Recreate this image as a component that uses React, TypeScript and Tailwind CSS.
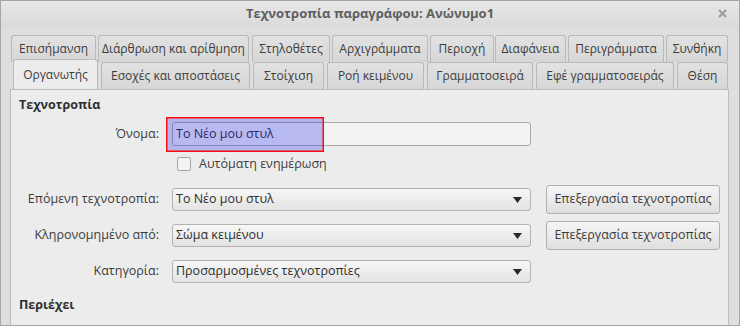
const font = { fontFamily: '"Open Sans", "Noto Sans", "DejaVu Sans", sans-serif' };

const topTabs = [
  { label: "Επισήμανση", cls: "ml-[10px] w-[85px]" },
  { label: "Διάρθρωση και αρίθμηση", cls: "ml-[2px] w-[151px]" },
  { label: "Στηλοθέτες", cls: "ml-[3px] w-[78px]" },
  { label: "Αρχιγράμματα", cls: "ml-[2px] w-[96px]" },
  { label: "Περιοχή", cls: "ml-[2px] w-[64px]" },
  { label: "Διαφάνεια", cls: "ml-[1px] w-[71px]" },
  { label: "Περιγράμματα", cls: "ml-[2px] w-[96px]" },
  { label: "Συνθήκη", cls: "ml-[2px] w-[62px]" },
];

const bottomTabs = [
  { label: "Οργανωτής", cls: "ml-[12px] w-[85px]", active: true },
  { label: "Εσοχές και αποστάσεις", cls: "ml-[3px] w-[149px]" },
  { label: "Στοίχιση", cls: "ml-[3px] w-[71px]" },
  { label: "Ροή κειμένου", cls: "ml-[3px] w-[97px]" },
  { label: "Γραμματοσειρά", cls: "ml-[3px] w-[106px]" },
  { label: "Εφέ γραμματοσειράς", cls: "ml-[3px] w-[138px]" },
  { label: "Θέση", cls: "ml-[3px] w-[51px]" },
];

function Tab({ label, cls, active }: { label: string; cls: string; active?: boolean }) {
  return (
    <div
      className={
        cls +
        " flex shrink-0 items-center justify-center rounded-t-[3px] border border-b-0 border-[#b9b9b9] text-[12px] text-[#3c3c3c] " +
        (active ? "h-[30px] bg-[#ececec]" : "h-[27px] bg-gradient-to-b from-[#e2e2e2] to-[#d6d6d6]")
      }
    >
      {label}
    </div>
  );
}

function Select({ value }: { value: string }) {
  return (
    <div className="flex h-[23px] w-[359px] items-center justify-between rounded-[3px] border border-[#b3b3b3] bg-gradient-to-b from-[#f7f7f7] to-[#e3e3e3] pl-[3px] pr-[8px] text-[#2e2e2e]">
      <span>{value}</span>
      <svg width="9" height="6" viewBox="0 0 9 6">
        <path d="M0 0h9L4.5 6z" fill="#2a2a2a" />
      </svg>
    </div>
  );
}

function EditButton() {
  return (
    <button className="ml-[15px] flex h-[29px] w-[174px] items-center justify-center rounded-[3px] border border-[#b0b0b0] bg-gradient-to-b from-[#f5f5f5] to-[#dfdfdf] text-[#3c3c3c]">
      Επεξεργασία τεχνοτροπίας
    </button>
  );
}

function Label({ children }: { children: string }) {
  return <div className="w-[141px] shrink-0 pr-[1px] text-right text-[#3c3c3c]">{children}</div>;
}

export default function App() {
  return (
    <div style={font} className="relative h-[326px] w-[740px] overflow-hidden border border-[#a5a5a5] bg-[#dedede] text-[12.5px]">
      {/* title bar */}
      <div className="relative flex h-[26px] items-center justify-center bg-gradient-to-b from-[#e8e8e8] to-[#dadada]">
        <span className="text-[13px] font-bold text-[#5e5e5e]">Τεχνοτροπία παραγράφου: Ανώνυμο1</span>
        <svg className="absolute right-[12px] top-[8px]" width="9" height="9" viewBox="0 0 9 9">
          <path d="M1 1l7 7M8 1l-7 7" stroke="#9a9a9a" strokeWidth="2" />
        </svg>
      </div>

      {/* tabs */}
      <div className="mt-[8px] flex h-[27px]">
        {topTabs.map((t) => (
          <Tab key={t.label} {...t} />
        ))}
      </div>
      <div className="-mt-[2px] flex h-[29px] items-end">
        {bottomTabs.map((t) => (
          <Tab key={t.label} {...t} />
        ))}
      </div>

      {/* panel */}
      <div className="relative ml-[9px] mr-[10px] h-[240px] border border-[#bdbdbd] bg-[#ececec] text-[#3c3c3c]">
        <div className="pl-[8px] pt-[7px]">
          <div className="h-[16px] font-bold leading-[16px] text-[#2f2f2f]">Τεχνοτροπία</div>

          <div className="mt-[9px] flex h-[24px] items-center">
            <Label>Όνομα:</Label>
            <div className="relative ml-[12px] flex h-[24px] w-[359px] items-center rounded-[3px] border border-[#a9a9a9] bg-[#f3f3f3] pl-[3px] text-[#2e2e2e]">
              Το Νέο μου στυλ
              {/* highlight annotation over the field */}
              <div className="absolute left-[-7px] top-[-6px] h-[35px] w-[158px] bg-[rgba(30,30,235,0.27)] shadow-[inset_0_0_0_1.5px_#ff0a0a]" />
            </div>
          </div>

          <div className="mt-[9px] flex h-[18px] items-center pl-[158px]">
            <div className="h-[14px] w-[14px] rounded-[2px] border border-[#a5a5a5] bg-[#f4f4f4]" />
            <span className="ml-[8px]">Αυτόματη ενημέρωση</span>
          </div>

          <div className="mt-[12px] flex h-[29px] items-center">
            <Label>Επόμενη τεχνοτροπία:</Label>
            <div className="ml-[12px]">
              <Select value="Το Νέο μου στυλ" />
            </div>
            <EditButton />
          </div>

          <div className="mt-[7px] flex h-[29px] items-center">
            <Label>Κληρονομημένο από:</Label>
            <div className="ml-[12px]">
              <Select value="Σώμα κειμένου" />
            </div>
            <EditButton />
          </div>

          <div className="mt-[10px] flex h-[23px] items-center">
            <Label>Κατηγορία:</Label>
            <div className="ml-[12px]">
              <Select value="Προσαρμοσμένες τεχνοτροπίες" />
            </div>
          </div>

          <div className="mt-[14px] h-[16px] font-bold leading-[16px] text-[#2f2f2f]">Περιέχει</div>
        </div>
      </div>
    </div>
  );
}
